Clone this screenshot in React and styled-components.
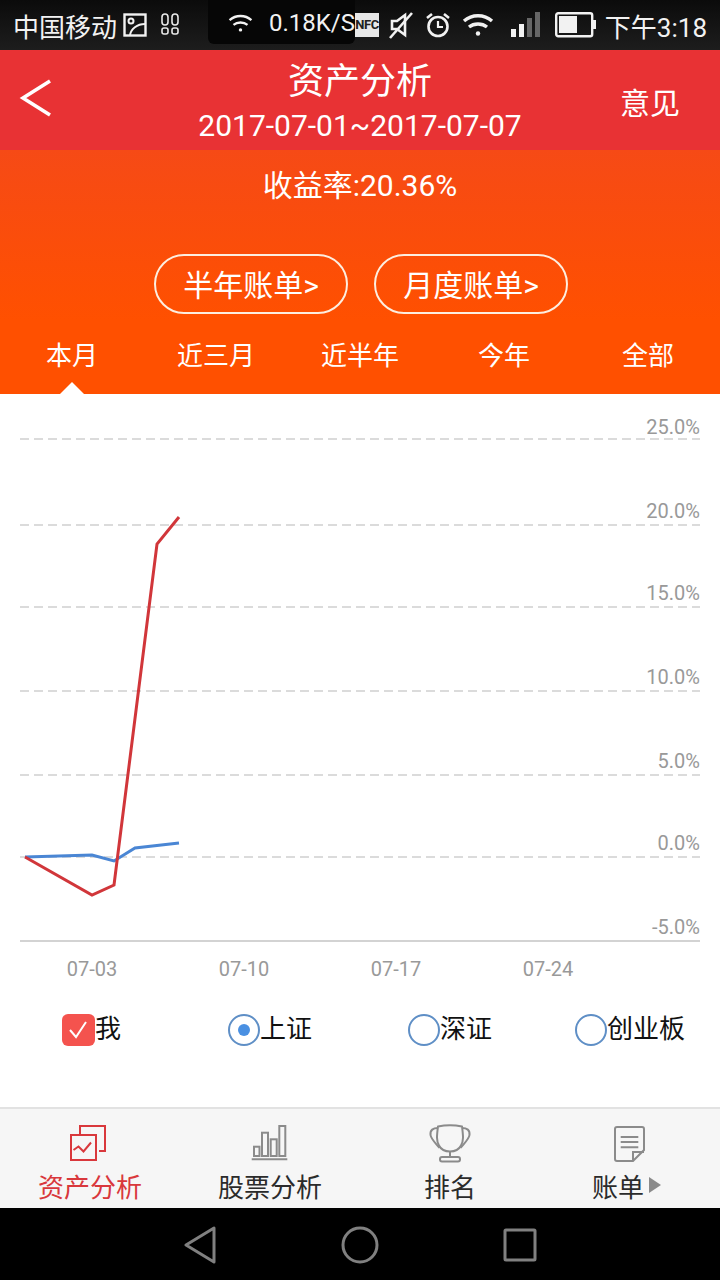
import styled, { createGlobalStyle } from 'styled-components';

const GlobalStyle = createGlobalStyle`
  html, body {
    margin: 0;
    padding: 0;
    background: #fff;
  }
  * {
    box-sizing: border-box;
  }
`;

const FONT = `Roboto, "Noto Sans CJK SC", sans-serif`;

const Page = styled.div`
  width: 720px;
  height: 1280px;
  overflow: hidden;
  display: flex;
  flex-direction: column;
  font-family: ${FONT};
  background: #fff;
`;

const StatusBar = styled.div`
  height: 50px;
  flex: none;
  display: flex;
  align-items: flex-start;
  background: linear-gradient(#0b0b0b, #1d1d1d);
  color: #f2f2f2;
`;

const StatusLeft = styled.div`
  width: 208px;
  height: 50px;
  display: flex;
  align-items: center;
  padding-left: 13px;
  font-size: 26px;
  gap: 5px;
`;

const StatusMiddle = styled.div`
  width: 147px;
  height: 44px;
  display: flex;
  align-items: center;
  padding: 2px 0 0 20px;
  gap: 16px;
  background: #060606;
  border-radius: 0 0 6px 6px;
  font-size: 24px;
  white-space: nowrap;
`;

const StatusRight = styled.div`
  flex: 1;
  height: 50px;
  display: flex;
  align-items: center;
  padding-right: 13px;
  font-size: 26px;
  white-space: nowrap;
`;

const NfcBadge = styled.div`
  position: relative;
  width: 24px;
  height: 24px;
  margin-right: 10px;
  background: #e8e8e8;
  color: #222;
  font-size: 13px;
  font-weight: 700;
  line-height: 24px;
  letter-spacing: -0.5px;
  text-align: center;
`;

const Clock = styled.span`
  margin-left: auto;
`;

const Header = styled.div`
  height: 100px;
  flex: none;
  display: flex;
  align-items: center;
  justify-content: space-between;
  padding: 0 40px 0 18px;
  background: #e83234;
  color: #fff;
  position: relative;
`;

const BackArrow = styled.svg`
  display: block;
  margin: 0 0 4px 1px;
`;

const HeaderTitles = styled.div`
  position: absolute;
  left: 0;
  right: 0;
  top: 11px;
  text-align: center;
`;

const Title = styled.div`
  font-size: 36px;
  line-height: 42px;
`;

const DateRange = styled.div`
  font-size: 30px;
  line-height: 38px;
  margin-top: 4px;
`;

const FeedbackLink = styled.div`
  font-size: 30px;
  line-height: 40px;
  margin-top: 8px;
`;

const SummaryPanel = styled.div`
  height: 244px;
  flex: none;
  position: relative;
  display: flex;
  flex-direction: column;
  align-items: center;
  padding-top: 15px;
  color: #fff;
  background: linear-gradient(#f64a16, #ff5000 70%);
`;

const YieldText = styled.div`
  font-size: 30px;
  line-height: 42px;
`;

const BillButtons = styled.div`
  display: flex;
  gap: 26px;
  margin-top: 47px;
  padding-left: 2px;
`;

const BillButton = styled.div`
  width: 194px;
  height: 60px;
  border: 2px solid #fdeee0;
  border-radius: 30px;
  display: flex;
  align-items: center;
  justify-content: center;
  font-size: 30px;
  padding-bottom: 2px;
`;

const RangeTabs = styled.div`
  width: 100%;
  display: grid;
  grid-template-columns: repeat(5, 144px);
  margin-top: 20px;
`;

const RangeTab = styled.div`
  text-align: center;
  font-size: 26px;
  line-height: 44px;
`;

const TabPointer = styled.div`
  position: absolute;
  left: 60px;
  bottom: 0;
  width: 0;
  height: 0;
  border-left: 12px solid transparent;
  border-right: 12px solid transparent;
  border-bottom: 12px solid #fff;
`;

const Chart = styled.svg`
  display: block;
  flex: none;
  width: 720px;
  height: 606px;
  font-family: ${FONT};
`;

const Legend = styled.div`
  flex: none;
  height: 60px;
  display: grid;
  grid-template-columns: repeat(4, 180px);
`;

const LegendItem = styled.div`
  display: flex;
  align-items: center;
  justify-content: center;
  font-size: 26px;
  color: #111;
`;

const LegendLabel = styled.span`
  line-height: 32px;
  margin-bottom: 2px;
`;

const CheckBox = styled.div`
  width: 33px;
  height: 32px;
  margin-left: 3px;
  border-radius: 6px;
  background: #f4534e;
  display: flex;
  align-items: center;
  justify-content: center;
`;

const Radio = styled.div`
  width: 32px;
  height: 32px;
  border-radius: 50%;
  border: 2px solid #5f8fc6;
  display: flex;
  align-items: center;
  justify-content: center;

  &::after {
    content: '';
    width: 12px;
    height: 12px;
    border-radius: 50%;
    background: ${(p) => (p.$checked ? '#4a90e2' : 'transparent')};
  }
`;

const Spacer = styled.div`
  flex: 1;
`;

const TabBar = styled.div`
  height: 101px;
  flex: none;
  display: grid;
  grid-template-columns: repeat(4, 180px);
  background: #f6f6f6;
  border-top: 2px solid #e2e2e2;
`;

const TabItem = styled.div`
  display: flex;
  flex-direction: column;
  align-items: center;
  padding-top: 15px;
  color: ${(p) => (p.$active ? '#d9383c' : '#2b2b2b')};
`;

const TabIcon = styled.svg`
  display: block;
  width: 42px;
  height: 40px;
`;

const TabLabel = styled.div`
  display: flex;
  align-items: center;
  font-size: 26px;
  line-height: 38px;
  margin-top: 5px;
`;

const MoreArrow = styled.span`
  width: 0;
  height: 0;
  margin-left: 5px;
  margin-right: 7px;
  margin-bottom: 6px;
  border-top: 8px solid transparent;
  border-bottom: 8px solid transparent;
  border-left: 12px solid #8b8b8b;
`;

const NavBar = styled.div`
  height: 72px;
  flex: none;
  background: #000;
  display: grid;
  grid-template-columns: 160px 160px 160px;
  justify-content: center;
  align-items: center;
  padding-top: 2px;
`;

const NavSlot = styled.div`
  display: flex;
  justify-content: center;
`;

const gridLines = [439, 525, 607, 691, 775, 857];
const yLabels = [
  ['25.0%', 427],
  ['20.0%', 511],
  ['15.0%', 593],
  ['10.0%', 677],
  ['5.0%', 761],
  ['0.0%', 843],
  ['-5.0%', 927],
];
const xLabels = [
  ['07-03', 92],
  ['07-10', 244],
  ['07-17', 396],
  ['07-24', 548],
];
const tabs = ['本月', '近三月', '近半年', '今年', '全部'];

function WifiIcon({ size = 32, weight = 3 }) {
  return (
    <svg width={size} height={size * 0.75} viewBox="0 0 32 24" fill="none" stroke="#f2f2f2" strokeWidth={weight}>
      <path d="M2 8c8-7 20-7 28 0" />
      <path d="M7 14c5-4 13-4 18 0" />
      <circle cx="16" cy="20.5" r="2.2" fill="#f2f2f2" stroke="none" />
    </svg>
  );
}

function StatusIcons() {
  return (
    <>
      <svg width="24" height="24" viewBox="0 0 24 24" fill="none" stroke="#f2f2f2" strokeWidth="2.4" style={{ marginLeft: 1 }}>
        <rect x="1.5" y="1.5" width="21" height="21" />
        <circle cx="8" cy="8" r="2.5" strokeWidth="2" />
        <path d="M7 22c1-6 7-11 15-11" strokeWidth="2" />
      </svg>
      <svg width="20" height="24" viewBox="0 0 20 24" fill="none" stroke="#e8e8e8" strokeWidth="1.6" style={{ marginLeft: 8 }}>
        <rect x="2" y="1" width="6" height="11" rx="3" />
        <rect x="12" y="1" width="6" height="11" rx="3" />
        <rect x="2" y="15" width="6" height="6" rx="2" />
        <rect x="12" y="15" width="6" height="6" rx="2" />
      </svg>
    </>
  );
}

function RightIcons() {
  return (
    <>
      <svg width="24" height="28" viewBox="0 0 24 28" fill="none" stroke="#f2f2f2" strokeWidth="2.6" style={{ marginRight: 12 }}>
        <path d="M3 10h5l8-6v20l-8-6H3z" />
        <path d="M1 27L23 2" />
      </svg>
      <svg width="26" height="26" viewBox="0 0 26 26" fill="none" stroke="#f2f2f2" strokeWidth="2.6" style={{ marginRight: 11 }}>
        <circle cx="13" cy="14.5" r="9.5" />
        <path d="M13 9v6h5" strokeWidth="2.2" />
        <path d="M2 6l5-4M24 6l-5-4" />
      </svg>
      <WifiIcon size={32} weight={3.4} />
      <svg width="32" height="26" viewBox="0 0 32 26" style={{ marginLeft: 15, marginRight: 14 }}>
        <rect x="2" y="17" width="5" height="8" fill="#f2f2f2" />
        <rect x="10" y="12" width="5" height="13" fill="#f2f2f2" />
        <rect x="18" y="6" width="5" height="19" fill="#666" />
        <rect x="26" y="0" width="5" height="25" fill="#666" />
      </svg>
      <svg width="42" height="26" viewBox="0 0 42 26">
        <rect x="1.2" y="1.2" width="36" height="23" rx="2" fill="none" stroke="#f2f2f2" strokeWidth="2.4" />
        <rect x="4" y="4" width="18" height="17" fill="#f2f2f2" />
        <rect x="38" y="8" width="3" height="9" fill="#f2f2f2" />
      </svg>
    </>
  );
}

function AssetIcon() {
  return (
    <TabIcon viewBox="0 0 42 40" fill="none" stroke="#d9383c" strokeWidth="2">
      <rect x="2" y="11" width="25" height="25" />
      <path d="M11 11V2h25v25h-6" />
      <path d="M4.5 26l5-3.5 5 5 7.5-9" />
    </TabIcon>
  );
}

function StockIcon() {
  return (
    <TabIcon viewBox="0 0 42 40" fill="none" stroke="#8b8b8b" strokeWidth="2">
      <rect x="5" y="22.7" width="5.5" height="9.3" />
      <rect x="13" y="8.7" width="6" height="23.3" />
      <rect x="21.7" y="15.3" width="6" height="16.7" />
      <rect x="30.3" y="2" width="6" height="30" />
      <path d="M2.7 35.3h35.6" />
    </TabIcon>
  );
}

function TrophyIcon() {
  return (
    <TabIcon viewBox="0 0 42 40" fill="none" stroke="#8b8b8b" strokeWidth="2">
      <path d="M9 2.5c7-1.5 17-1.5 24 0 1 8 2 14-1 19-2 4-6 6-11 6s-9-2-11-6c-3-5-2-11-1-19z" />
      <path d="M9 4C4 4 1 6 1.5 11c.5 4 5 8 9 13" />
      <path d="M33 4c5 0 8 2 7.5 7-.5 4-5 8-9 13" />
      <path d="M21 27.5v5" />
      <rect x="11" y="33" width="20" height="4.5" rx="2" />
    </TabIcon>
  );
}

function BillIcon() {
  return (
    <TabIcon viewBox="0 0 42 40" fill="none" stroke="#8b8b8b" strokeWidth="2">
      <path d="M24 37H8a2 2 0 0 1-2-2V5a2 2 0 0 1 2-2h25a2 2 0 0 1 2 2v21z" />
      <path d="M24 37v-9h11" />
      <path d="M11.7 13h17.6M11.7 18h17.6M11.7 23.3h17.6" />
    </TabIcon>
  );
}

export default function App() {
  return (
    <Page>
      <GlobalStyle />
      <StatusBar>
        <StatusLeft>
          中国移动
          <StatusIcons />
        </StatusLeft>
        <StatusMiddle>
          <WifiIcon size={30} />
          <span>0.18K/S</span>
        </StatusMiddle>
        <StatusRight>
          <NfcBadge>NFC</NfcBadge>
          <RightIcons />
          <Clock>下午3:18</Clock>
        </StatusRight>
      </StatusBar>

      <Header>
        <BackArrow width="36" height="40" viewBox="0 0 36 40" fill="none" stroke="#fff" strokeWidth="3.6">
          <path d="M31 3L4 20l27 17" />
        </BackArrow>
        <HeaderTitles>
          <Title>资产分析</Title>
          <DateRange>2017-07-01~2017-07-07</DateRange>
        </HeaderTitles>
        <FeedbackLink>意见</FeedbackLink>
      </Header>

      <SummaryPanel>
        <YieldText>收益率:20.36%</YieldText>
        <BillButtons>
          <BillButton>半年账单&gt;</BillButton>
          <BillButton>月度账单&gt;</BillButton>
        </BillButtons>
        <RangeTabs>
          {tabs.map((t) => (
            <RangeTab key={t}>{t}</RangeTab>
          ))}
        </RangeTabs>
        <TabPointer />
      </SummaryPanel>

      <Chart viewBox="0 394 720 606">
        {gridLines.map((y) => (
          <line key={y} x1="20" x2="700" y1={y} y2={y} stroke="#cfcfcf" strokeWidth="1.5" strokeDasharray="9 5" />
        ))}
        <line x1="20" x2="700" y1="941" y2="941" stroke="#c4c4c4" strokeWidth="1.5" />
        {yLabels.map(([label, y]) => (
          <text key={label} x="700" y={y + 7} textAnchor="end" fontSize="20" fill="#999">
            {label}
          </text>
        ))}
        {xLabels.map(([label, x]) => (
          <text key={label} x={x} y="976" textAnchor="middle" fontSize="20" fill="#999">
            {label}
          </text>
        ))}
        <polyline points="25,857 92,855 114,861 135,848 179,843" fill="none" stroke="#4a86d4" strokeWidth="3" />
        <polyline points="25,857 92,895 114,885 157,544 179,517" fill="none" stroke="#d1363a" strokeWidth="3" />
      </Chart>

      <Legend>
        <LegendItem>
          <CheckBox>
            <svg width="20" height="18" viewBox="0 0 20 18" fill="none" stroke="#fff" strokeWidth="2">
              <path d="M2 9l6 7L18 1" />
            </svg>
          </CheckBox>
          <LegendLabel>我</LegendLabel>
        </LegendItem>
        <LegendItem>
          <Radio $checked />
          <LegendLabel>上证</LegendLabel>
        </LegendItem>
        <LegendItem>
          <Radio />
          <LegendLabel>深证</LegendLabel>
        </LegendItem>
        <LegendItem>
          <Radio />
          <LegendLabel>创业板</LegendLabel>
        </LegendItem>
      </Legend>

      <Spacer />

      <TabBar>
        <TabItem $active>
          <AssetIcon />
          <TabLabel>资产分析</TabLabel>
        </TabItem>
        <TabItem>
          <StockIcon />
          <TabLabel>股票分析</TabLabel>
        </TabItem>
        <TabItem>
          <TrophyIcon />
          <TabLabel>排名</TabLabel>
        </TabItem>
        <TabItem>
          <BillIcon />
          <TabLabel>
            账单
            <MoreArrow />
          </TabLabel>
        </TabItem>
      </TabBar>

      <NavBar>
        <NavSlot>
          <svg width="34" height="38" viewBox="0 0 34 38" fill="none" stroke="#808080" strokeWidth="3" strokeLinejoin="round">
            <path d="M31 2v34L3 19z" />
          </svg>
        </NavSlot>
        <NavSlot>
          <svg width="38" height="38" viewBox="0 0 38 38" fill="none" stroke="#808080" strokeWidth="3">
            <circle cx="19" cy="19" r="17" />
          </svg>
        </NavSlot>
        <NavSlot>
          <svg width="34" height="34" viewBox="0 0 34 34" fill="none" stroke="#808080" strokeWidth="3" strokeLinejoin="round">
            <rect x="2" y="2" width="30" height="30" rx="1" />
          </svg>
        </NavSlot>
      </NavBar>
    </Page>
  );
}
